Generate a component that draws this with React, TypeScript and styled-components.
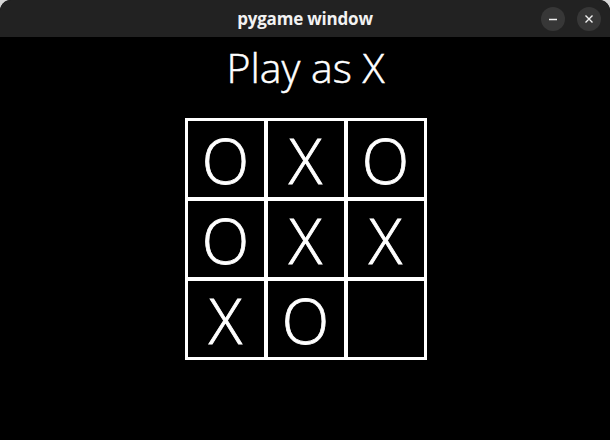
import React from "react";
import styled, { createGlobalStyle } from "styled-components";

const GlobalStyle = createGlobalStyle`
  html, body {
    margin: 0;
    padding: 0;
    background: #d6d6d6;
  }
  #root {
    width: 610px;
    height: 440px;
  }
`;

type Mark = "X" | "O" | "";

const board: Mark[] = ["O", "X", "O", "O", "X", "X", "X", "O", ""];

const Window = styled.div`
  width: 610px;
  height: 440px;
  display: flex;
  flex-direction: column;
  background: #000;
  border-radius: 11px 11px 0 0;
  overflow: hidden;
`;

const TitleBar = styled.div`
  position: relative;
  height: 37px;
  flex: none;
  background: #222222;
  display: flex;
  align-items: center;
  justify-content: center;
`;

const TitleText = styled.div`
  font-family: "Open Sans", "DejaVu Sans", sans-serif;
  font-weight: 700;
  font-size: 17px;
  color: #f2f2f2;
  letter-spacing: -0.2px;
`;

const Controls = styled.div`
  position: absolute;
  right: 9px;
  top: 7px;
  display: flex;
  gap: 12px;
`;

const CircleButton = styled.div`
  width: 24px;
  height: 24px;
  border-radius: 50%;
  background: #373737;
  display: flex;
  align-items: center;
  justify-content: center;
`;

const Content = styled.div`
  flex: 1;
  display: flex;
  flex-direction: column;
  align-items: center;
`;

const Heading = styled.div`
  margin-top: 10px;
  font-family: "Open Sans", "DejaVu Sans", sans-serif;
  font-weight: 300;
  font-size: 41px;
  line-height: 40px;
  color: #fff;
  margin-left: 1px;
  -webkit-text-stroke: 0.5px #fff;
`;

const Grid = styled.div`
  margin-top: 31px;
  margin-left: 1px;
  display: grid;
  grid-template-columns: repeat(3, 76px);
  grid-template-rows: repeat(3, 76px);
  gap: 4px;
  border: 3px solid #fff;
  background: #fff;
`;

const Cell = styled.div`
  background: #000;
  display: flex;
  align-items: center;
  justify-content: center;
  font-family: "Open Sans", "DejaVu Sans", sans-serif;
  font-weight: 300;
  font-size: 62px;
  line-height: 1;
  color: #fff;
  padding-top: 2px;
  -webkit-text-stroke: 0.8px #fff;
`;

export default function App() {
  return (
    <>
      <GlobalStyle />
      <Window>
        <TitleBar>
          <TitleText>pygame window</TitleText>
          <Controls>
            <CircleButton>
              <svg width="10" height="10" viewBox="0 0 10 10">
                <path d="M1 5.5h8" stroke="#f0f0f0" strokeWidth="1.3" />
              </svg>
            </CircleButton>
            <CircleButton>
              <svg width="10" height="10" viewBox="0 0 10 10">
                <path d="M1.5 1.5l7 7M8.5 1.5l-7 7" stroke="#f0f0f0" strokeWidth="1.4" />
              </svg>
            </CircleButton>
          </Controls>
        </TitleBar>
        <Content>
          <Heading>Play as X</Heading>
          <Grid>
            {board.map((m, i) => (
              <Cell key={i}>{m}</Cell>
            ))}
          </Grid>
        </Content>
      </Window>
    </>
  );
}
